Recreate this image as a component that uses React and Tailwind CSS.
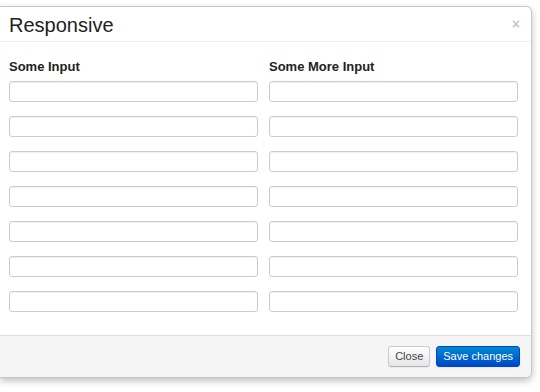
export default function App() {
  const rows = [0, 1, 2, 3, 4, 5, 6];

  return (
    <div className="w-[540px] h-[392px] bg-white overflow-hidden font-['Liberation_Sans',Arial,sans-serif] text-[#333]">
      <div className="pt-[6px]">
        <div className="w-[532px] bg-white border border-l-0 border-[#c8c8c8] rounded-tr-[6px] rounded-br-[6px] shadow-[0_3px_7px_rgba(0,0,0,0.25)] overflow-hidden">
          {/* header */}
          <div className="h-[35px] flex items-center justify-between pl-[9px] pr-[11px] border-b border-[#eee]">
            <h3 className="text-[20px] leading-none text-[#222] mt-[1px]">Responsive</h3>
            <span className="text-[14px] leading-none text-[#c8c8c8] font-bold">×</span>
          </div>

          {/* body */}
          <div className="pl-[9px] pr-[13px] pt-[17px] pb-[23px] grid grid-cols-2 gap-x-[11px]">
            <div>
              <div className="text-[13px] font-bold text-[#222] leading-[16px] mb-[6px]">Some Input</div>
              <div className="flex flex-col gap-[14px]">
                {rows.map((r) => (
                  <input
                    key={r}
                    className="h-[21px] w-full border border-[#ccc] rounded-[3px] bg-white shadow-[inset_0_1px_1px_rgba(0,0,0,0.06)] outline-none"
                  />
                ))}
              </div>
            </div>
            <div>
              <div className="text-[13px] font-bold text-[#222] leading-[16px] mb-[6px]">Some More Input</div>
              <div className="flex flex-col gap-[14px]">
                {rows.map((r) => (
                  <input
                    key={r}
                    className="h-[21px] w-full border border-[#ccc] rounded-[3px] bg-white shadow-[inset_0_1px_1px_rgba(0,0,0,0.06)] outline-none"
                  />
                ))}
              </div>
            </div>
          </div>

          {/* footer */}
          <div className="h-[42px] bg-[#f5f5f5] border-t border-[#ddd] flex items-center justify-end gap-[6px] pr-[11px]">
            <button className="h-[21px] px-[6px] text-[11px] text-[#444] border border-[#ccc] border-b-[#b3b3b3] rounded-[3px] bg-gradient-to-b from-white to-[#e6e6e6] shadow-[0_1px_2px_rgba(0,0,0,0.05)]">
              Close
            </button>
            <button className="h-[21px] px-[6px] text-[11px] text-white border border-[#0044cc] rounded-[3px] bg-gradient-to-b from-[#0088cc] to-[#0044cc] shadow-[0_1px_2px_rgba(0,0,0,0.05)]">
              Save changes
            </button>
          </div>
        </div>
      </div>
    </div>
  );
}
